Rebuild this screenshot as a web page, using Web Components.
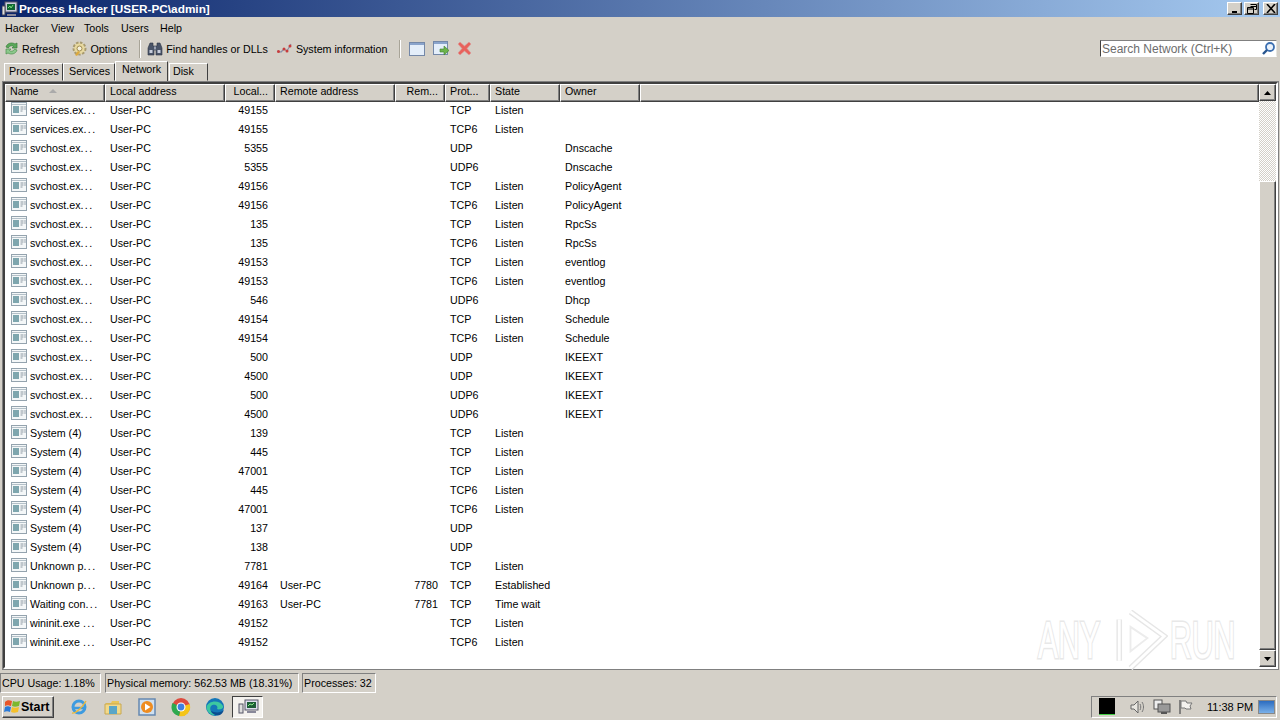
<!DOCTYPE html>
<html>
<head>
<meta charset="utf-8">
<title>Process Hacker</title>
<style>
  html, body { margin: 0; height: 100%; }
  body {
    width: 1280px; height: 720px; overflow: hidden;
    background: #d4d0c8; color: #000;
    font: 10.7px "Liberation Sans", "Noto Sans", sans-serif;
    display: flex; flex-direction: column;
    position: relative;
  }
</style>
</head>
<body>
<ph-titlebar>Process Hacker [USER-PC\admin]</ph-titlebar>
<ph-menubar></ph-menubar>
<ph-toolbar></ph-toolbar>
<ph-tabs></ph-tabs>
<ph-network-list></ph-network-list>
<ph-statusbar></ph-statusbar>
<ph-taskbar></ph-taskbar>
<ph-watermark></ph-watermark>

<script>
"use strict";

const bevelUp = "border:1px solid;border-color:#fff #404040 #404040 #fff;box-shadow:inset -1px -1px 0 #808080;";

customElements.define("ph-titlebar", class extends HTMLElement {
  constructor() {
    super();
    const btn = (glyph) => `<span class="btn">${glyph}</span>`;
    this.attachShadow({mode: "open"}).innerHTML = `<style>
      :host { display:flex; align-items:center; height:17px; flex:none; color:#fff;
        background:linear-gradient(90deg,#0a246a,#a6caf0); font-weight:700; font-size:11.8px; }
      svg { flex:none; margin:0 1px 0 2px; }
      .title { flex:1; white-space:nowrap; }
      .btns { display:flex; margin-right:2px; gap:0; }
      .btn { width:15px; height:13px; margin-left:2px; box-sizing:border-box; background:#d4d0c8; ${bevelUp} display:flex; align-items:center; justify-content:center; }
      .btn:nth-child(2) { margin-right:2px; }
      .btn svg { margin:0; }
    </style>
    <svg width="16" height="16" viewBox="0 0 16 16"><rect x="3" y="1" width="12" height="10" fill="#ccd" stroke="#556"/><rect x="5" y="3" width="8" height="6" fill="#163"/><path d="M6 7l2-2 1 2 2-3" stroke="#7d7" fill="none"/><rect x="0" y="5" width="3" height="9" fill="#ddd" stroke="#445"/><path d="M5 13h9v2H5z" fill="#889"/></svg>
    <span class="title"><slot></slot></span>
    <span class="btns">
      ${btn('<svg width="8" height="8"><path d="M1 6h5v2H1z" fill="#000"/></svg>')}
      ${btn('<svg width="10" height="10"><path d="M3.5 .5h6v5h-2M3.5 2.5h6M.5 3.5h6v6h-6zM.5 5h6" fill="none" stroke="#000"/></svg>')}
      ${btn('<svg width="10" height="9"><path d="M1 0l8 9M9 0L1 9" stroke="#000" stroke-width="1.6"/></svg>')}
    </span>`;
  }
});

customElements.define("ph-menubar", class extends HTMLElement {
  constructor() {
    super();
    const items = [["Hacker", 46], ["View", 33], ["Tools", 37], ["Users", 39], ["Help", 30]];
    this.attachShadow({mode: "open"}).innerHTML = `<style>
      :host { display:flex; height:21px; flex:none; align-items:center; padding-left:5px; }
    </style>${items.map((t) => `<span style="width:${t[1]}px">${t[0]}</span>`).join("")}`;
  }
});

const toolIcons = {
  refresh: `<svg width="17" height="17" viewBox="0 0 17 17"><path d="M3 7c1-4 6-5 9-3l2-1v5h-5l1.500-1.500C9 5 6 6 5.500 8z" fill="#5aa85a" stroke="#3a7d3a" stroke-width=".7"/><path d="M14 10c-1 4-6 5-9 3l-2 1v-5h5L6.500 10.500C8 12 11 11 11.500 9z" fill="#8cc88c" stroke="#4b8f4b" stroke-width=".7"/></svg>`,
  options: `<svg width="17" height="17" viewBox="0 0 17 17"><circle cx="8.500" cy="8.500" r="6" fill="#e8d9a0" stroke="#a89a70" stroke-width="2" stroke-dasharray="2.500 1.500"/><circle cx="8.500" cy="8.500" r="2.500" fill="#f5f0dd" stroke="#a08c50"/><path d="M4 15l3-4 2 1-3 4z" fill="#dca83c"/></svg>`,
  find: `<svg width="16" height="16" viewBox="0 0 16 16"><path d="M1 7l2-5h3v3h4V2h3l2 5v7H9V9H7v5H1z" fill="#4a5468" stroke="#2c3444" stroke-width=".6"/><path d="M2.500 9h3v3h-3zM10.500 9h3v3h-3z" fill="#c8cedc"/><path d="M7 5.500h2v3H7z" fill="#9aa2b4"/></svg>`,
  sysinfo: `<svg width="17" height="16" viewBox="0 0 17 16"><path d="M1 10l4 1 3-3 3 2 4-7" fill="none" stroke="#8a8fa8" stroke-width="1.200"/><circle cx="2.500" cy="10.500" r="1.500" fill="#c83c3c"/><circle cx="8" cy="8" r="1.500" fill="#c83c3c"/><circle cx="11" cy="10" r="1.500" fill="#c83c3c"/><circle cx="14" cy="5" r="1.500" fill="#c83c3c"/></svg>`,
  win: `<svg width="16" height="14" viewBox="0 0 16 14"><rect x=".5" y=".5" width="15" height="13" fill="#e4eefa" stroke="#7488a8"/><rect x="1" y="1" width="14" height="2" fill="#8aa4cc"/></svg>`,
  winGo: `<svg width="17" height="16" viewBox="0 0 17 16"><rect x=".5" y=".5" width="14" height="13" fill="#e4eefa" stroke="#7488a8"/><rect x="1" y="1" width="13" height="2" fill="#8aa4cc"/><path d="M7 8h4V5l5 4.500-5 4.500v-3H7z" fill="#6cb44c" stroke="#3f7f2c" stroke-width=".6"/></svg>`,
  close: `<svg width="15" height="15" viewBox="0 0 15 15"><path d="M3 1l4.500 4L12 1l2 2-4 4.500 4 4.500-2 2-4.500-4L3 14l-2-2 4-4.500L1 3z" fill="#e8625c" stroke="#d89a98" stroke-width=".6"/></svg>`,
  search: `<svg width="15" height="15" viewBox="0 0 15 15"><circle cx="9" cy="6" r="4" fill="#eaf2fb" stroke="#3c6fb0" stroke-width="1.800"/><path d="M6 9l-4 4" stroke="#27558f" stroke-width="2.400"/></svg>`
};

customElements.define("ph-toolbar", class extends HTMLElement {
  constructor() {
    super();
    const tool = (icon, label, gap = 2) => `<span class="tool" style="gap:${gap}px">${toolIcons[icon]}${label ? `<span>${label}</span>` : ""}</span>`;
    const space = (w) => `<span style="width:${w}px;flex:none"></span>`;
    this.attachShadow({mode: "open"}).innerHTML = `<style>
      :host { display:flex; height:21px; flex:none; align-items:center; padding-left:3px; }
      .tool { display:flex; align-items:center; white-space:nowrap; }
      .sep { width:1px; height:18px; background:#a8a498; border-right:1px solid #fff; }
      .gap { flex:1; }
      .search { display:flex; align-items:center; justify-content:space-between; box-sizing:border-box; width:177px; height:17px; margin-right:3px; padding-left:1px;
        background:#fff; border:1px solid; border-color:#808080 #e8e6e0 #fff #404040; color:#6d6d6d; font-size:12px; }
    </style>
    ${tool("refresh", "Refresh")}${space(12)}
    ${tool("options", "Options")}${space(12)}<span class="sep"></span>${space(6)}
    ${tool("find", "Find handles or DLLs", 3)}${space(8)}
    ${tool("sysinfo", "System information", 3)}${space(12)}<span class="sep"></span>${space(8)}
    ${tool("win")}${space(8)}${tool("winGo")}${space(7)}${tool("close")}
    <span class="gap"></span>
    <span class="search"><span>Search Network (Ctrl+K)</span>${toolIcons.search}</span>`;
  }
});

customElements.define("ph-tabs", class extends HTMLElement {
  constructor() {
    super();
    const tabs = [["Processes", 59, 4, 0, ""], ["Services", 52, 5, 0, ""], ["Network", 53, 6, 0, "on"], ["Disk", 39, 3, 1, ""]];
    this.attachShadow({mode: "open"}).innerHTML = `<style>
      :host { display:flex; height:22px; flex:none; align-items:flex-end; padding-left:4px; }
      .tab { box-sizing:border-box; height:18px; padding-top:0; border:1px solid; border-color:#fff #404040 transparent #fff; white-space:nowrap; line-height:15px; }
      .on { height:20px; border-bottom:0; }
    </style>
    ${tabs.map((t) => `<span class="tab ${t[4]}" style="width:${t[1]}px;padding-left:${t[2]}px;margin-left:${t[3]}px">${t[0]}</span>`).join("")}`;
  }
});

const rows = [
  ["services.ex...", "49155", "", "", "TCP", "Listen", ""],
  ["services.ex...", "49155", "", "", "TCP6", "Listen", ""],
  ["svchost.ex...", "5355", "", "", "UDP", "", "Dnscache"],
  ["svchost.ex...", "5355", "", "", "UDP6", "", "Dnscache"],
  ["svchost.ex...", "49156", "", "", "TCP", "Listen", "PolicyAgent"],
  ["svchost.ex...", "49156", "", "", "TCP6", "Listen", "PolicyAgent"],
  ["svchost.ex...", "135", "", "", "TCP", "Listen", "RpcSs"],
  ["svchost.ex...", "135", "", "", "TCP6", "Listen", "RpcSs"],
  ["svchost.ex...", "49153", "", "", "TCP", "Listen", "eventlog"],
  ["svchost.ex...", "49153", "", "", "TCP6", "Listen", "eventlog"],
  ["svchost.ex...", "546", "", "", "UDP6", "", "Dhcp"],
  ["svchost.ex...", "49154", "", "", "TCP", "Listen", "Schedule"],
  ["svchost.ex...", "49154", "", "", "TCP6", "Listen", "Schedule"],
  ["svchost.ex...", "500", "", "", "UDP", "", "IKEEXT"],
  ["svchost.ex...", "4500", "", "", "UDP", "", "IKEEXT"],
  ["svchost.ex...", "500", "", "", "UDP6", "", "IKEEXT"],
  ["svchost.ex...", "4500", "", "", "UDP6", "", "IKEEXT"],
  ["System (4)", "139", "", "", "TCP", "Listen", ""],
  ["System (4)", "445", "", "", "TCP", "Listen", ""],
  ["System (4)", "47001", "", "", "TCP", "Listen", ""],
  ["System (4)", "445", "", "", "TCP6", "Listen", ""],
  ["System (4)", "47001", "", "", "TCP6", "Listen", ""],
  ["System (4)", "137", "", "", "UDP", "", ""],
  ["System (4)", "138", "", "", "UDP", "", ""],
  ["Unknown p...", "7781", "", "", "TCP", "Listen", ""],
  ["Unknown p...", "49164", "User-PC", "7780", "TCP", "Established", ""],
  ["Waiting con...", "49163", "User-PC", "7781", "TCP", "Time wait", ""],
  ["wininit.exe ...", "49152", "", "", "TCP", "Listen", ""],
  ["wininit.exe ...", "49152", "", "", "TCP6", "Listen", ""]
];

const processIcon = `<svg width="16" height="14" viewBox="0 0 16 14"><rect x=".5" y=".5" width="15" height="13" fill="#f4f7f8" stroke="#94a3ae"/><path d="M1 2.500h14" stroke="#b4c0c8"/><rect x="2" y="4" width="6" height="7" fill="#7ea6ae"/><path d="M9.500 5h3M9.500 7h3M9.500 9h2" stroke="#8a96a0"/><path d="M14 4v4" stroke="#9aa6b0"/></svg>`;

customElements.define("ph-network-list", class extends HTMLElement {
  constructor() {
    super();
    const row = (r) => `<div class="row">
      <span class="cell name">${processIcon}<span>${r[0].replace("...", '<span class="dots">...</span>')}</span></span>
      <span class="cell">User-PC</span>
      <span class="cell num">${r[1]}</span>
      <span class="cell">${r[2]}</span>
      <span class="cell num">${r[3]}</span>
      <span class="cell">${r[4]}</span>
      <span class="cell">${r[5]}</span>
      <span class="cell">${r[6]}</span>
    </div>`;
    this.attachShadow({mode: "open"}).innerHTML = `<style>
      :host { display:flex; flex:1; min-height:0; margin:1px 2px 2px 3px; box-sizing:border-box; background:#fff;
        border:2px solid; border-color:#404040 #fff #fff #404040; box-shadow:0 0 0 1px #808080; }
      .main { flex:1; min-width:0; display:flex; flex-direction:column; }
      .cols { display:grid; grid-template-columns:100px 120px 50px 120px 50px 45px 70px 80px 1fr; }
      .head { height:17px; background:#d4d0c8; flex:none; }
      .head span { box-sizing:border-box; padding:0 0 4px 4px; line-height:12px; ${bevelUp} display:flex; align-items:center; gap:10px; }
      .head span.r { justify-content:flex-end; padding-right:6px; }
      .head i { width:0; height:0; border:4px solid transparent; border-bottom:4px solid #aaa; border-top:0; }
      .row { display:grid; grid-template-columns:100px 120px 50px 120px 50px 45px 70px 80px; height:19px; align-items:center; }
      .cell { white-space:nowrap; padding-left:5px; line-height:19px; }
      .num { text-align:right; padding-right:7px; padding-left:0; }
      .name { display:flex; align-items:center; gap:3px; padding-left:6px; }
      .name svg { flex:none; margin-top:-4px; }
      .dots { letter-spacing:1.400px; }
      .scroll { width:17px; flex:none; display:flex; flex-direction:column; }
      .arrow { box-sizing:border-box; height:17px; flex:none; background:#d4d0c8; ${bevelUp} display:flex; align-items:center; justify-content:center; }
      .track { height:80px; flex:none; background:repeating-conic-gradient(#d4d0c8 0 25%, #fff 0 50%) 0 0/2px 2px; }
      .thumb { flex:1; box-sizing:border-box; background:#d4d0c8; ${bevelUp} }
    </style>
    <div class="main">
      <div class="cols head">
        <span>Name <i></i></span><span>Local address</span><span class="r">Local...</span><span>Remote address</span><span class="r">Rem...</span><span>Prot...</span><span>State</span><span>Owner</span><span></span>
      </div>
      ${rows.map(row).join("")}
    </div>
    <div class="scroll">
      <div class="arrow"><svg width="7" height="4"><path d="M3.500 0L7 4H0z"/></svg></div>
      <div class="track"></div>
      <div class="thumb"></div>
      <div class="arrow"><svg width="7" height="4"><path d="M0 0h7L3.500 4z"/></svg></div>
    </div>`;
  }
});

customElements.define("ph-statusbar", class extends HTMLElement {
  constructor() {
    super();
    const panels = [["CPU Usage: 1.18%", 101, 0], ["Physical memory: 562.53 MB (18.31%)", 194, 4], ["Processes: 32", 74, 3]];
    this.attachShadow({mode: "open"}).innerHTML = `<style>
      :host { display:flex; height:20px; flex:none; margin-top:2px; }
      span { box-sizing:border-box; padding-left:1px; line-height:18px; border:1px solid; border-color:#808080 #fff #fff #808080; white-space:nowrap; }
      span:first-child { border-left:0; padding-left:2px; }
    </style>${panels.map((p) => `<span style="width:${p[1]}px;margin-left:${p[2]}px">${p[0]}</span>`).join("")}`;
  }
});

customElements.define("ph-taskbar", class extends HTMLElement {
  constructor() {
    super();
    const apps = [
      `<svg width="20" height="20" viewBox="0 0 20 20"><circle cx="10" cy="10" r="6" fill="none" stroke="#3d9be0" stroke-width="3"/><path d="M4 11h12" stroke="#3d9be0" stroke-width="2.500"/><path d="M3 16c3 1 10-5 14-12" fill="none" stroke="#e8b83c" stroke-width="1.500"/></svg>`,
      `<svg width="20" height="20" viewBox="0 0 20 20"><path d="M3 6h5l1-2h7v3H3z" fill="#e9c65a"/><path d="M2 7h16v10H2z" fill="#f2d98a" stroke="#c8a850"/><path d="M6 9h8v8H6z" fill="#5aa6c8"/></svg>`,
      `<svg width="20" height="20" viewBox="0 0 20 20"><rect x="2" y="2" width="16" height="16" fill="#cfe0f0" stroke="#6688b0" stroke-width="1.500"/><circle cx="10" cy="10" r="6" fill="#ee8c20"/><path d="M8 6.500L13.500 10 8 13.500z" fill="#fff"/></svg>`,
      `<svg width="20" height="20" viewBox="0 0 20 20"><circle cx="10" cy="10" r="9" fill="#dd4b3e"/><path d="M10 10L18.500 7A9 9 0 0 1 8 19z" fill="#f5c518"/><path d="M10 10L8 19A9 9 0 0 1 1.500 6z" fill="#2da94f"/><circle cx="10" cy="10" r="4.500" fill="#fff"/><circle cx="10" cy="10" r="3.400" fill="#3f7fe0"/></svg>`,
      `<svg width="20" height="20" viewBox="0 0 20 20"><circle cx="10" cy="10" r="9" fill="#1577b8"/><path d="M1.500 10C3 4 14 2 18 9c1 3-4 4-6 3 2-3-3-6-6-3-2 3 0 8 5 9-5 1-9-3-9.500-8z" fill="#3dc8a0"/><path d="M6 14c1 3 5 5 9 4 2-1 3-3 4-5-3 3-9 3-13 1z" fill="#0c4d8f"/></svg>`
    ];
    this.attachShadow({mode: "open"}).innerHTML = `<style>
      :host { display:flex; height:27px; flex:none; box-sizing:border-box; align-items:center; background:#d4d0c8; padding-left:2px; }
      .start { box-sizing:border-box; width:52px; height:22px; ${bevelUp} display:flex; align-items:center; gap:0; padding-left:1px; font:700 12.500px "Liberation Sans", sans-serif; }
      .apps { display:flex; gap:14px; margin-left:15px; }
      .apps svg { display:block; }
      .active { box-sizing:border-box; width:31px; height:22px; margin-left:7px; background:#f4f2ee; border:1px solid; border-color:#404040 #fff #fff #404040; display:flex; align-items:center; justify-content:center; }
      .tray { margin-left:auto; margin-right:3px; box-sizing:border-box; width:186px; height:22px; border:1px solid; border-color:#808080 #fff #fff #808080; display:flex; align-items:center; padding-left:7px; }
      .black { width:16px; height:16px; background:#000; border-bottom:1px solid #4c4; flex:none; }
      .tray svg { flex:none; }
      .time { margin-left:14px; white-space:nowrap; font-size:11px; }
      .desk { margin-left:auto; margin-right:1px; width:15px; height:12px; background:linear-gradient(#2c6cc0,#7ab0e8); border:1px solid #888; }
    </style>
    <span class="start"><svg width="17" height="17" viewBox="0 0 17 17"><path d="M1 4c2-2 4-2 7-1l-1 5c-3-1-4-1-6 0z" fill="#e8562a"/><path d="M9 3c2 1 4 1 7 0l-1 5c-3 1-5 1-7 0z" fill="#7cb82f"/><path d="M1 9c2-1 3-1 6 0l-1 5c-2-1-4-1-6 0z" fill="#2a7ad8"/><path d="M8 9c2 1 4 1 7 0l-1 5c-3 1-5 1-7 0z" fill="#f5c02a"/></svg>Start</span>
    <span class="apps">${apps.join("")}</span>
    <span class="active"><svg width="22" height="18" viewBox="0 0 22 18"><rect x="8" y="2" width="13" height="10" fill="#dde" stroke="#556"/><rect x="10" y="4" width="9" height="6" fill="#1c5c38"/><path d="M11 8l2-2 2 1 2-2" stroke="#8e8" fill="none"/><rect x="2" y="6" width="4" height="9" fill="#ddd" stroke="#556"/><path d="M10 13h9v2h-9z" fill="#889"/></svg></span>
    <span class="tray">
      <span class="black"></span>
      <svg style="margin-left:14px" width="18" height="16" viewBox="0 0 18 16"><path d="M2 6h3l4-4v12l-4-4H2z" fill="#e8e6e0" stroke="#666"/><path d="M11 5c1 2 1 4 0 6M13 3c2 3 2 7 0 10" fill="none" stroke="#777"/></svg>
      <svg style="margin-left:6px" width="18" height="16" viewBox="0 0 18 16"><rect x="1" y="1" width="8" height="9" fill="#eee" stroke="#555"/><rect x="5" y="5" width="12" height="8" fill="#999" stroke="#555"/><path d="M8 14h6" stroke="#555" stroke-width="2"/></svg>
      <svg style="margin-left:6px" width="16" height="16" viewBox="0 0 16 16"><path d="M3 1v14" stroke="#666" stroke-width="1.500"/><path d="M4 2h5l1 2h5l-2 3 1 3H9l-1-1H4z" fill="#f4f2ee" stroke="#777"/></svg>
      <span class="time">11:38 PM</span>
      <span class="desk"></span>
    </span>`;
  }
});

customElements.define("ph-watermark", class extends HTMLElement {
  constructor() {
    super();
    this.attachShadow({mode: "open"}).innerHTML = `<style>
      :host { position:absolute; left:1038px; top:610px; width:196px; height:60px; display:flex; align-items:center; pointer-events:none; color:#fff; font:400 52px "Liberation Sans", sans-serif; -webkit-text-stroke:3px #e8e8e8; paint-order:stroke fill; }
      .t { display:inline-block; width:62px; flex:none; transform:scaleX(.58); transform-origin:left center; white-space:nowrap; }
      svg { flex:none; margin:0 2px 0 8px; }
    </style>
    <span class="t">ANY</span>
    <svg width="60" height="60" viewBox="0 0 60 64"><path d="M10 10v44M22 2L58 28 22 62" fill="none" stroke="#e6e6e6" stroke-width="6"/><path d="M10 10v44M22 2L58 28 22 62" fill="none" stroke="#fff" stroke-width="3"/><path d="M22 18L40 30 22 44z" fill="none" stroke="#ececec" stroke-width="2"/></svg>
    <span class="t">RUN</span>`;
  }
});
</script>
</body>
</html>
